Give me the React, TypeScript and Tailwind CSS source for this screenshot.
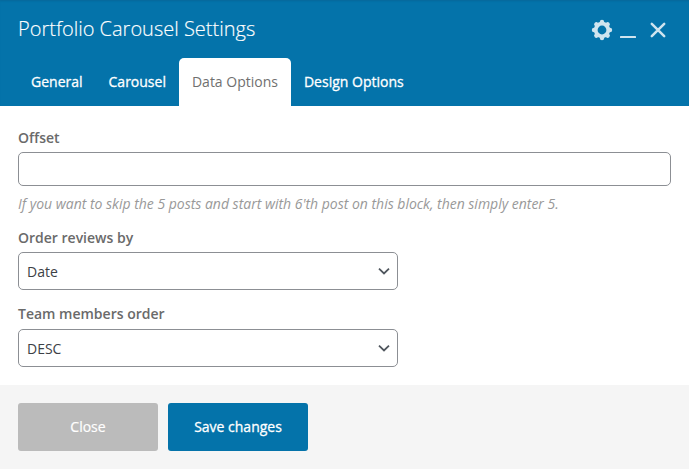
import { useState } from "react";

const tabs = ["General", "Carousel", "Data Options", "Design Options"];

function GearIcon() {
  const lobes = [0, 45, 90, 135, 180, 225, 270, 315];
  return (
    <svg width="22" height="22" viewBox="-11 -11 22 22" fill="none" stroke="currentColor">
      <circle r="6.3" strokeWidth="3.8" />
      {lobes.map((a) => (
        <circle key={a} cy="-8" r="2.2" fill="currentColor" stroke="none" transform={`rotate(${a})`} />
      ))}
    </svg>
  );
}

function Select({ id, label, value }: { id: string; label: string; value: string }) {
  return (
    <div className="flex flex-col">
      <label htmlFor={id} className="h-5 text-sm leading-5 font-semibold text-[#6a6a6a]">
        {label}
      </label>
      <button
        id={id}
        type="button"
        className="flex h-[38px] w-[380px] items-center justify-between rounded-[5px] border border-[#8c8f94] bg-white pr-[7px] pl-2 text-sm text-[#3c4146]"
      >
        <span className="pt-0.5">{value}</span>
        <svg width="12" height="8" viewBox="0 0 12 8" fill="none" stroke="#50575e" strokeWidth="1.8">
          <path d="M1 1.6 L6 6.4 L11 1.6" />
        </svg>
      </button>
    </div>
  );
}

export default function App() {
  const [active, setActive] = useState("Data Options");
  return (
    <div className="flex h-[469px] w-[689px] flex-col overflow-hidden bg-white font-['Open_Sans','Noto_Sans',sans-serif]">
      <header className="flex h-[106px] flex-col justify-between bg-[#0473aa] shadow-[inset_0_2px_2px_-1px_#07689a]">
        <div className="flex h-[58px] items-center justify-between pr-[23px] pl-[18px]">
          <h1 className="text-xl leading-7 font-light text-white [-webkit-text-stroke:0.15px]">Portfolio Carousel Settings</h1>
          <div className="flex items-center text-[#cfe4ef]">
            <button type="button" aria-label="Settings" className="mt-0.5">
              <GearIcon />
            </button>
            <button type="button" aria-label="Minimize" className="ml-[7px]">
              <svg width="16" height="22" viewBox="0 0 16 22" fill="currentColor">
                <rect y="18" width="16" height="2" rx="0.5" />
              </svg>
            </button>
            <button type="button" aria-label="Close window" className="mt-0.5 ml-3.5">
              <svg width="16" height="16" viewBox="0 0 16 16" fill="none" stroke="currentColor" strokeWidth="2.5" strokeLinecap="round">
                <path d="M1.8 1.8 L14.2 14.2 M14.2 1.8 L1.8 14.2" />
              </svg>
            </button>
          </div>
        </div>
        <nav className="flex h-12 pl-[18px]">
          {tabs.map((t) => (
            <button
              key={t}
              type="button"
              onClick={() => setActive(t)}
              className={`h-12 rounded-t-[5px] px-[13px] text-sm leading-5 whitespace-nowrap ${
                t === active ? "bg-white text-[#707070]" : "font-medium text-white [-webkit-text-stroke:0.3px]"
              }`}
            >
              {t}
            </button>
          ))}
        </nav>
      </header>

      <main className="flex h-[279px] flex-col px-[18px] pt-[22px]">
        <label htmlFor="offset" className="h-5 text-sm leading-5 font-semibold text-[#6a6a6a]">
          Offset
        </label>
        <input id="offset" type="text" className="mt-1 h-[34px] w-[653px] rounded-[5px] border border-[#8c8f94] bg-white px-2 text-sm" />
        <p className="mt-2 h-5 text-sm leading-5 tracking-[-0.01px] text-[#999] italic">
          If you want to skip the 5 posts and start with 6'th post on this block, then simply enter 5.
        </p>
        <div className="mt-3.5 flex flex-col gap-3.5 [&_button]:mt-1 [&>div:last-child>button]:mt-[5px]">
          <Select id="order-by" label="Order reviews by" value="Date" />
          <Select id="order" label="Team members order" value="DESC" />
        </div>
      </main>

      <footer className="flex h-[84px] gap-2.5 bg-[#f5f5f5] px-[18px] pt-[18px]">
        <button type="button" className="h-12 w-[140px] rounded-[3px] bg-[#bbb] text-sm text-white [-webkit-text-stroke:0.2px]">
          Close
        </button>
        <button type="button" className="h-12 w-[140px] rounded-[3px] bg-[#0473aa] text-sm font-medium text-white [-webkit-text-stroke:0.3px]">
          Save changes
        </button>
      </footer>
    </div>
  );
}
